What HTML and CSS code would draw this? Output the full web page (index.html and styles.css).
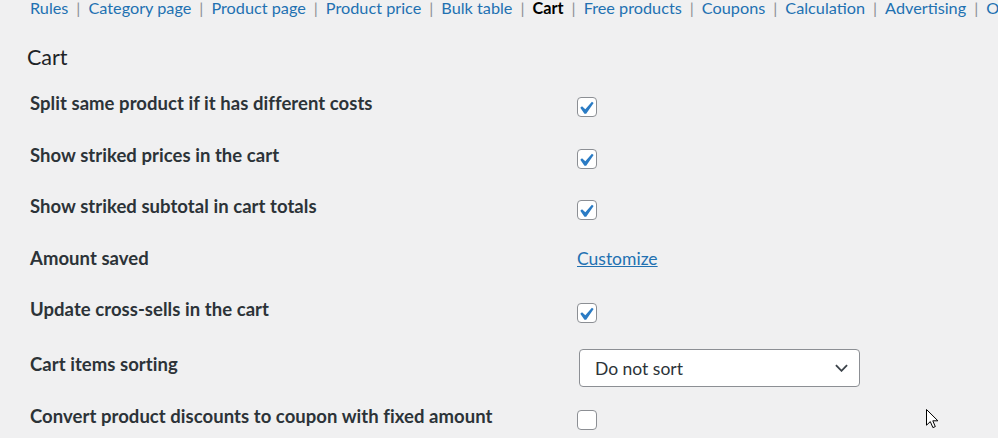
FILE: index.html
```html
<!DOCTYPE html>
<html lang="en">
<head>
<meta charset="utf-8">
<title>Cart settings</title>
<link rel="stylesheet" href="styles.css">
</head>
<body>
<div class="wrap">
  <nav class="tabs">
    <a class="tab" href="#">Rules</a><span class="sep">|</span>
    <a class="tab" href="#">Category page</a><span class="sep">|</span>
    <a class="tab" href="#">Product page</a><span class="sep">|</span>
    <a class="tab" href="#">Product price</a><span class="sep">|</span>
    <a class="tab" href="#">Bulk table</a><span class="sep">|</span>
    <span class="tab current">Cart</span><span class="sep">|</span>
    <a class="tab" href="#">Free products</a><span class="sep">|</span>
    <a class="tab" href="#">Coupons</a><span class="sep">|</span>
    <a class="tab" href="#">Calculation</a><span class="sep">|</span>
    <a class="tab" href="#">Advertising</a><span class="sep">|</span>
    <a class="tab" href="#">Options</a>
  </nav>

  <h2 class="title">Cart</h2>

  <div class="form">
    <div class="row">
      <div class="label">Split same product if it has different costs</div>
      <div class="field"><span class="check on"><svg viewBox="4 2 14 14"><path d="M14.83 4.89l1.34.94-5.81 8.38H9.02L5.78 9.67l1.34-1.25 2.57 2.4z"/></svg></span></div>
    </div>
    <div class="row">
      <div class="label">Show striked prices in the cart</div>
      <div class="field"><span class="check on"><svg viewBox="4 2 14 14"><path d="M14.83 4.89l1.34.94-5.81 8.38H9.02L5.78 9.67l1.34-1.25 2.57 2.4z"/></svg></span></div>
    </div>
    <div class="row">
      <div class="label">Show striked subtotal in cart totals</div>
      <div class="field"><span class="check on"><svg viewBox="4 2 14 14"><path d="M14.83 4.89l1.34.94-5.81 8.38H9.02L5.78 9.67l1.34-1.25 2.57 2.4z"/></svg></span></div>
    </div>
    <div class="row">
      <div class="label">Amount saved</div>
      <div class="field"><a class="link" href="#">Customize</a></div>
    </div>
    <div class="row">
      <div class="label">Update cross-sells in the cart</div>
      <div class="field"><span class="check on"><svg viewBox="4 2 14 14"><path d="M14.83 4.89l1.34.94-5.81 8.38H9.02L5.78 9.67l1.34-1.25 2.57 2.4z"/></svg></span></div>
    </div>
    <div class="row row-select">
      <div class="label">Cart items sorting</div>
      <div class="field">
        <div class="select"><span>Do not sort</span><svg class="chev" viewBox="0 0 14 8"><path d="M1 1l6 6 6-6"/></svg></div>
      </div>
    </div>
    <div class="row">
      <div class="label">Convert product discounts to coupon with fixed amount</div>
      <div class="field"><span class="check"></span></div>
    </div>
  </div>
</div>
<svg class="cursor" viewBox="0 0 13 20"><path d="M0.5 0.5V16.2L4.3 12.6L6.9 18.6L9.3 17.6L6.8 11.8H11.9Z"/></svg>
</body>
</html>
```

FILE: styles.css
```css
html, body {
  margin: 0;
  padding: 0;
}
body {
  width: 998px;
  height: 438px;
  overflow: hidden;
  background: #f0f0f1;
  font-family: Lato, "Open Sans", sans-serif;
  color: #1d2327;
  position: relative;
}
.wrap {
  padding-left: 30px;
}
.tabs {
  height: 16px;
  line-height: 16px;
  font-size: 16.25px;
  display: flex;
  white-space: nowrap;
}
.tab {
  color: #2271b1;
  text-decoration: none;
}
.tab.current {
  color: #000;
  font-weight: 700;
}
.sep {
  color: #8c8f94;
  margin: 0 8px;
}
.title {
  margin: 25.5px 0 0 -3px;
  font-size: 21.5px;
  line-height: 30px;
  font-weight: 400;
  color: #1d2327;
}
.form {
  margin-top: 7.5px;
}
.row {
  display: grid;
  grid-template-columns: 547px 1fr;
  align-items: start;
  height: 51.5px;
  padding-top: 14px;
  box-sizing: border-box;
}
.row-select {
  height: 55.5px;
  padding-top: 12.5px;
}
.label {
  font-size: 18.5px;
  letter-spacing: 0.05px;
  line-height: 20px;
  font-weight: 700;
  color: #2c3338;
}
.row-select .label {
  margin-top: 5px;
}
.field {
  display: flex;
}
.check {
  margin-top: 4px;
  width: 20px;
  height: 20px;
  box-sizing: border-box;
  border: 1px solid #8c8f94;
  border-radius: 4px;
  background: #fff;
  display: flex;
}
.check svg {
  width: 18px;
  height: 18px;
  fill: #2a7bc4;
}
.link {
  margin-top: 1px;
  font-size: 17.5px;
  line-height: 20px;
  color: #2271b1;
  text-decoration: underline;
}
.select {
  margin-left: 2px;
  width: 281px;
  height: 38px;
  box-sizing: border-box;
  border: 1px solid #8c8f94;
  border-radius: 4px;
  background: #fff;
  display: flex;
  align-items: center;
  justify-content: space-between;
  padding: 0 11px 0 15px;
  font-size: 17.5px;
  color: #2c3338;
}
.chev {
  width: 13px;
  height: 8px;
  fill: none;
  stroke: #3c434a;
  stroke-width: 2;
}
.cursor {
  position: absolute;
  left: 926px;
  top: 409px;
  width: 13px;
  height: 20px;
  fill: #fff;
  stroke: #000;
  stroke-width: 1;
}
```
